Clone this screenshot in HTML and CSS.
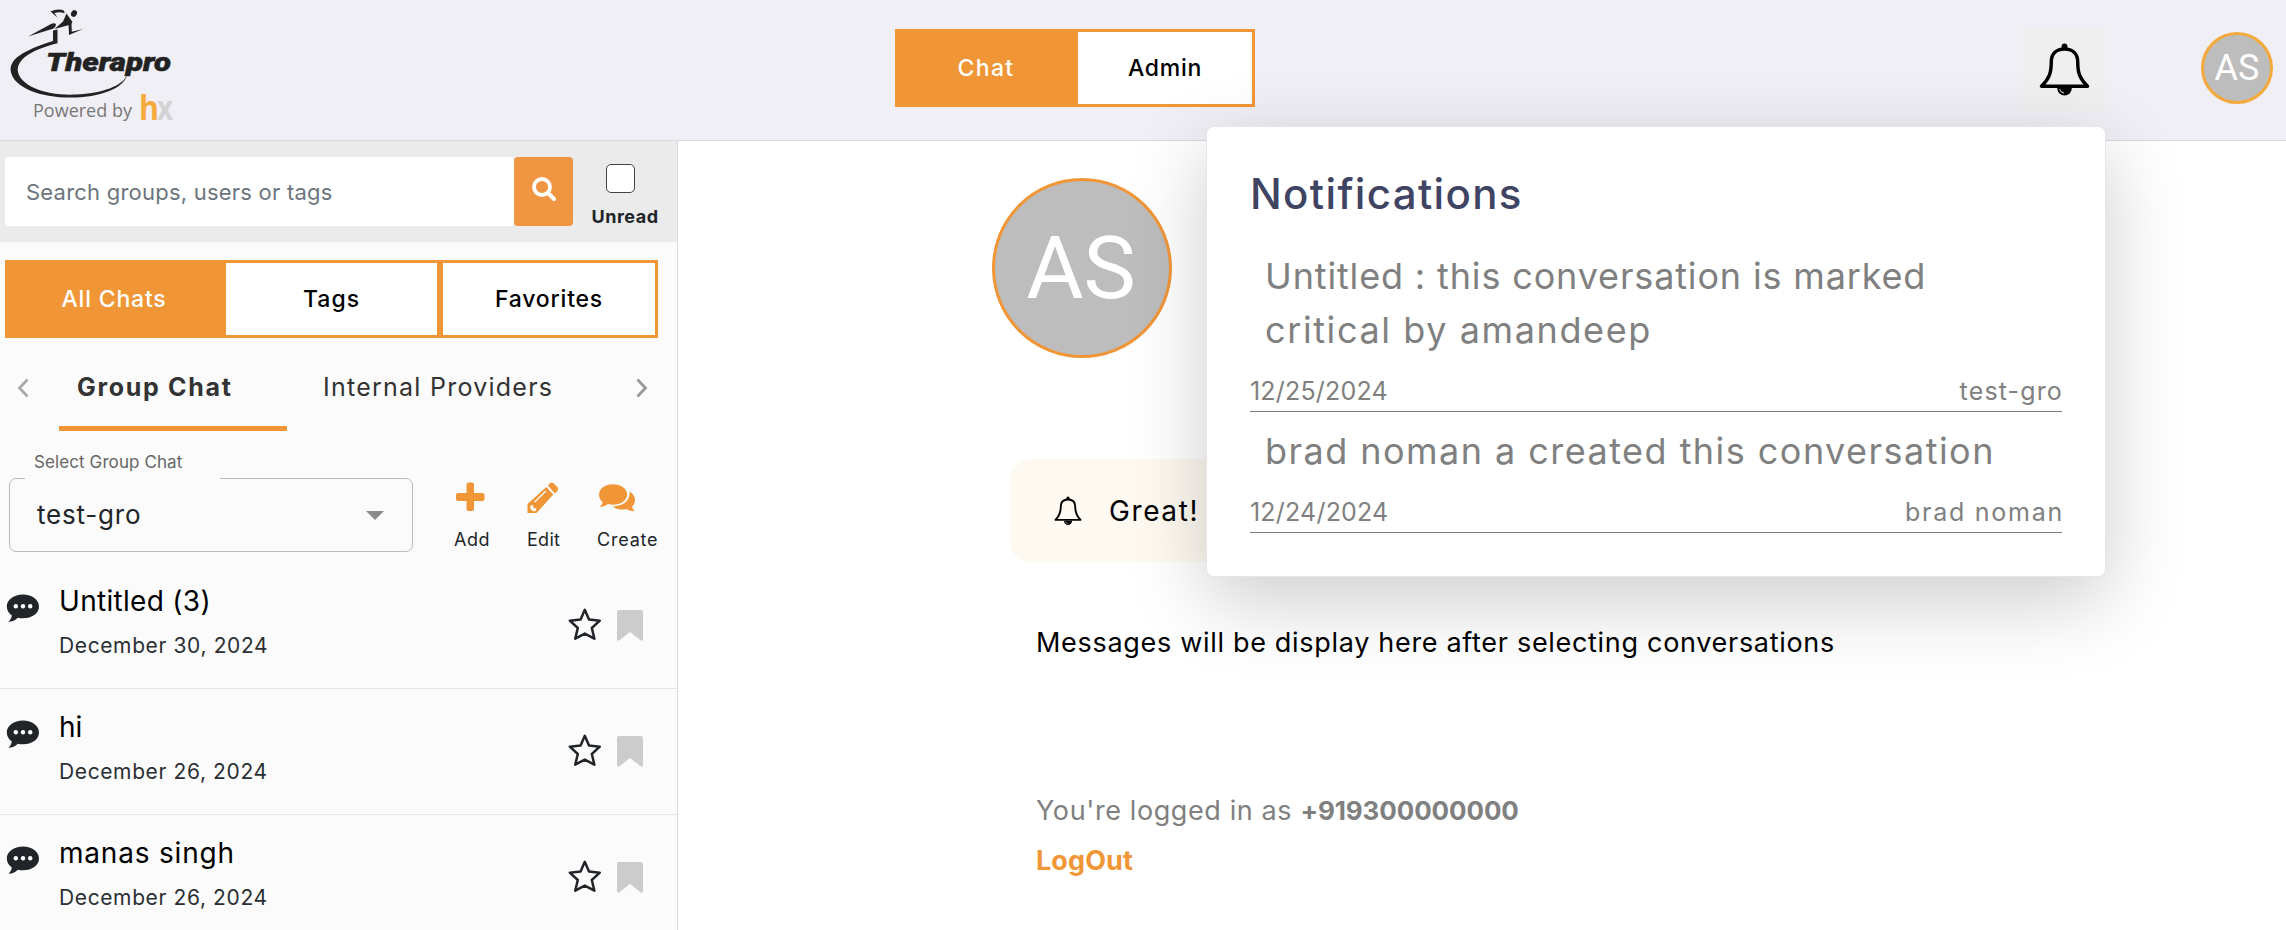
FILE: index.html
```html
<!DOCTYPE html>
<html lang="en">
<head>
<meta charset="utf-8">
<title>Chat</title>
<link rel="stylesheet" href="styles.css">
</head>
<body>
<svg class="defs" width="0" height="0">
  <symbol id="bell" viewBox="0 0 52 56">
    <path d="M26 6.500c-8 0-13.500 4.500-13.500 13.500 0 11-2 17-10 24.500h47c-8-7.500-10-13.500-10-24.500 0-9-5.500-13.500-13.500-13.500z" fill="none" stroke="currentColor" stroke-width="3.500" stroke-linejoin="round"/>
    <circle cx="26" cy="4" r="3" fill="currentColor"/>
    <path d="M18.500 46a7.500 8 0 0 0 15 0z" fill="currentColor"/>
    <path d="M21 47.500a5.500 5 0 0 0 4.500 4" fill="none" stroke="#eee" stroke-width="1"/>
  </symbol>
  <symbol id="bubble" viewBox="0 0 34 30">
    <path d="M17 0.500C26 0.500 33 5.800 33 12.500s-7 11.800-16 11.800c-2 0-3.600-.2-5.200-.6C9.500 26.300 6 27.800 2.500 27.800c2-2 3.200-4.200 3.300-6.300C3 19.300.8 16.500.8 12.500.8 5.800 8 .5 17 .5z" fill="#212529"/>
    <circle cx="9.800" cy="12.300" r="2.200" fill="#fff"/><circle cx="17" cy="12.300" r="2.200" fill="#fff"/><circle cx="24.200" cy="12.300" r="2.200" fill="#fff"/>
  </symbol>
  <symbol id="star" viewBox="0 0 34 34">
    <path d="M16.800 2.800l4.200 9.800 10.800 1.100-8 7.300 2.600 10.700-9.600-5.100-9.600 5.100L9.800 21l-8-7.300 10.800-1.100z" fill="none" stroke="#212529" stroke-width="2.500" stroke-linejoin="round"/>
  </symbol>
  <symbol id="mark" viewBox="0 0 26 31">
    <path d="M2 0h22a2 2 0 0 1 2 2v27c0 1.600-1.200 2.200-2.400 1.200L13 22 2.400 30.200C1.200 31.200 0 30.600 0 29V2a2 2 0 0 1 2-2z" fill="#ccc"/>
  </symbol>
</svg>

<header class="topbar">
  <div class="brand">
    <svg class="brand-logo" width="180" height="128" viewBox="0 0 180 128">
      <path d="M53 30.500l4.500-1v13.700C30 50 16 60 18 72c3 14 28 24 58 22.500 27-1 46-9 51-19-4 13-26 21-51 22-33 1.300-61-9-65-25-3-13 12-22 42-31.500z" fill="#222"/>
      <path d="M28 36.500L51 24q4-1.500 5 .5-.5 3-4 4.500z" fill="#222"/>
      <path d="M54.500 29L63 21.500 66.500 13.500 72.500 22 71 24.500z" fill="#222"/>
      <path d="M50.500 11.500Q57 8.300 63 10q2 1.200 1.500 3.300Q60 11.500 54.500 13l3 4.500z" fill="#222"/>
      <path d="M68.500 24l3-.5.300 8.300L83 29l-14 6z" fill="#222"/>
      <ellipse cx="74" cy="13.500" rx="2.800" ry="3.500" transform="rotate(30 74 13.500)" fill="#222"/>
      <text x="46" y="71" class="logo-name" textLength="125" lengthAdjust="spacingAndGlyphs">Therapro</text>
      <text x="33" y="117" class="logo-sub" textLength="99" lengthAdjust="spacingAndGlyphs">Powered by</text>
      <text x="157" y="119.500" class="logo-x" textLength="16" lengthAdjust="spacingAndGlyphs">x</text>
      <text x="139" y="119.500" class="logo-h" textLength="20" lengthAdjust="spacingAndGlyphs">h</text>
    </svg>
  </div>
  <nav class="switch">
    <a class="switch-item is-on"><span class="t-chat">Chat</span></a>
    <a class="switch-item"><span class="t-admin">Admin</span></a>
  </nav>
  <div class="account">
    <div class="bell-box"><svg class="bell-lg"><use href="#bell"/></svg></div>
    <div class="avatar avatar-sm">AS</div>
  </div>
</header>

<div class="body">
  <aside class="side">
    <div class="search">
      <div class="search-field"><span class="t-search">Search groups, users or tags</span></div>
      <div class="search-btn">
        <svg width="24" height="24" viewBox="0 0 24 24"><circle cx="10" cy="10" r="8" fill="none" stroke="#fff" stroke-width="3.800"/><path d="M16 16l6 6" stroke="#fff" stroke-width="4" stroke-linecap="round"/></svg>
      </div>
      <div class="unread"><span class="box"></span><b class="t-unread">Unread</b></div>
    </div>
    <div class="filters">
      <a class="filter is-on"><span class="t-all">All Chats</span></a>
      <a class="filter"><span class="t-tags">Tags</span></a>
      <a class="filter"><span class="t-fav">Favorites</span></a>
    </div>
    <div class="tabs">
      <svg class="arrow" width="12" height="20" viewBox="0 0 12 20"><path d="M10.500 1.500L2.500 10l8 8.500" fill="none" stroke="#aaa" stroke-width="2.800"/></svg>
      <div class="tab tab-on"><b class="t-group">Group Chat</b></div>
      <div class="tab tab-off"><span class="t-internal">Internal Providers</span></div>
      <svg class="arrow" width="12" height="20" viewBox="0 0 12 20"><path d="M1.500 1.500l8 8.500-8 8.500" fill="none" stroke="#999" stroke-width="2.800"/></svg>
    </div>
    <div class="picker">
      <div class="select">
        <span class="select-label"><span class="t-label">Select Group Chat</span></span>
        <span class="t-value">test-gro</span>
        <svg width="18" height="9" viewBox="0 0 18 9"><path d="M0 0h18L9 9z" fill="#8a8a8a"/></svg>
      </div>
      <div class="actions">
        <div class="action a-add"><svg width="30" height="30" viewBox="0 0 30 30"><path d="M11.500 2.500q0-2 2-2h3.500q2 0 2 2v8.500h8.500q2 0 2 2v4q0 2-2 2H19v8q0 2-2 2h-3.500q-2 0-2-2v-8H3q-2 0-2-2v-4q0-2 2-2h8.500z" fill="#f09637"/></svg><span class="t-add">Add</span></div>
        <div class="action a-edit"><svg width="32" height="32" viewBox="0 0 32 32"><path d="M20.800 3.500l2-2q2-1.800 4 0l3.500 3.500q1.500 2 0 4l-2.300 2.500zM19.300 5l7 7.500L9.500 31H.5v-9z" fill="#f09637"/><path d="M7.500 20L19 9" fill="none" stroke="#fbfbfb" stroke-width="1.300"/><path d="M3.500 23.500l2.500-.5.500 3 3 .5-.8 2.500-2.700.3-2.800-2.800z" fill="#fff"/></svg><span class="t-edit">Edit</span></div>
        <div class="action a-create"><svg width="38" height="32" viewBox="0 0 38 32"><path d="M31.500 9.500c3.500 2 5.500 5 5.500 8.500 0 2.600-1 4.900-2.900 6.700.5 1.800 1.500 3.200 2.400 4.500-3 .2-5.600-.7-7.800-2.200-5 1.200-10.700.3-14-2.600C25 24.500 32.500 18.500 31.500 9.500z" fill="#f09637"/><path d="M15 2.200C23 2.200 29.200 6.800 29.200 12.500S23 22.800 15 22.800c-1.800 0-3.500-.2-5-.7-2.200 1.700-5 2.900-8 2.900 1.300-1.500 2.300-3.100 2.700-5C2.300 18 1 15.500 1 12.500 1 6.800 7 2.200 15 2.200z" fill="#f09637"/></svg><span class="t-create">Create</span></div>
      </div>
    </div>
    <div class="list">
      <div class="row"><svg class="i-bubble"><use href="#bubble"/></svg><div class="who"><span class="name t-n1">Untitled (3)</span><span class="date">December 30, 2024</span></div><svg class="i-star"><use href="#star"/></svg><svg class="i-mark"><use href="#mark"/></svg></div>
      <div class="row"><svg class="i-bubble"><use href="#bubble"/></svg><div class="who"><span class="name t-n2">hi</span><span class="date">December 26, 2024</span></div><svg class="i-star"><use href="#star"/></svg><svg class="i-mark"><use href="#mark"/></svg></div>
      <div class="row"><svg class="i-bubble"><use href="#bubble"/></svg><div class="who"><span class="name t-n3">manas singh</span><span class="date">December 26, 2024</span></div><svg class="i-star"><use href="#star"/></svg><svg class="i-mark"><use href="#mark"/></svg></div>
    </div>
  </aside>

  <main class="main">
    <div class="avatar avatar-lg">AS</div>
    <div class="banner"><svg class="bell-sm"><use href="#bell"/></svg><span class="t-great">Great!</span></div>
    <p class="hint"><span class="t-hint">Messages will be display here after selecting conversations</span></p>
    <p class="login"><span class="t-login">You're logged in as </span><b class="t-phone">+919300000000</b></p>
    <p class="logout"><b class="t-logout">LogOut</b></p>
  </main>
</div>

<section class="popup">
  <h2 class="t-title">Notifications</h2>
  <article class="note">
    <p class="note-text"><span class="t-m1">Untitled : this conversation is marked</span><br><span class="t-m2">critical by amandeep</span></p>
    <div class="note-meta"><span class="t-date">12/25/2024</span><span class="t-r1">test-gro</span></div>
  </article>
  <article class="note">
    <p class="note-text"><span class="t-m3">brad noman a created this conversation</span></p>
    <div class="note-meta"><span class="t-date">12/24/2024</span><span class="t-r2">brad noman</span></div>
  </article>
</section>
</body>
</html>
```

FILE: styles.css
```css
* { box-sizing: border-box; }
body { margin: 0; width: 2286px; height: 930px; overflow: hidden; position: relative; background: #fff; color: #000; font-family: Inter, "Open Sans", sans-serif; font-size: 26px; line-height: 1; }
p, h2 { margin: 0; }
span, b { white-space: nowrap; }
.defs { position: absolute; }

/* header */
.topbar { height: 141px; display: flex; background: #f0eff5; border-bottom: 1px solid #d9d8e2; }
.brand { width: 895px; }
.brand-logo { display: block; overflow: visible; }
.logo-name { font: italic 900 25px Roboto, sans-serif; fill: #222; stroke: #222; stroke-width: .5px; }
.logo-sub { font: 18px "Open Sans", sans-serif; fill: #777; }
.logo-h { font: bold 34px "Open Sans", sans-serif; fill: #f5ab3d; }
.logo-x { font: bold 34px "Open Sans", sans-serif; fill: #d3d3d6; }
.switch { display: flex; width: 360px; height: 78px; margin-top: 29px; border: 3px solid #f09637; background: #fff; }
.switch-item { flex: 1; display: flex; align-items: center; justify-content: center; font-size: 23px; font-weight: 500; }
.switch-item.is-on { flex: 0 0 180px; padding-right: 4px; background: #f09637; color: #fff; }
.account { margin-left: auto; display: flex; padding-right: 13px; }
.bell-box { width: 83px; height: 83px; margin: 28px 95px 0 0; padding: 14px 16px; background: #efefef; }
.bell-lg { display: block; width: 51px; height: 56px; }
.avatar { display: flex; align-items: center; justify-content: center; border: 3px solid #f09637; border-radius: 50%; background: #bdbdbd; color: #fff; font-family: Roboto, sans-serif; }
.avatar-sm { width: 72px; height: 72px; margin-top: 32px; border-color: #f4a93c; font-size: 36px; }
.avatar-lg { width: 180px; height: 180px; margin: 37px 0 0 314px; padding-right: 2px; font-size: 88px; }

/* sidebar */
.body { display: flex; height: 789px; overflow: hidden; }
.side { flex: none; width: 678px; background: #fbfbfb; border-right: 1px solid #d9d8e2; display: flex; flex-direction: column; }
.side > div { flex: none; }
.search { height: 101px; display: flex; padding: 16px 0 0 5px; background: #ebebeb; }
.search-field { width: 509px; height: 69px; padding-left: 21px; display: flex; align-items: center; background: #fff; border-radius: 4px; color: #6c757d; font-size: 22px; }
.search-btn { width: 59px; height: 69px; display: flex; align-items: center; justify-content: center; padding-bottom: 5px; background: #f09642; border-radius: 4px; }
.unread { width: 68px; margin-left: 18px; display: flex; flex-direction: column; align-items: center; color: #212529; font-size: 18px; }
.box { width: 29px; height: 29px; margin: 7px 0 15px -10px; border: 1px solid #444; border-radius: 5px; background: #fff; }
.filters { display: flex; width: 653px; height: 78px; margin: 18px 0 0 5px; border: 3px solid #f09637; background: #fff; }
.filter { display: flex; align-items: center; justify-content: center; font-size: 23px; font-weight: 500; }
.filter.is-on { width: 218px; padding-right: 6px; color: #fff; background: #f09637; }
.filter:nth-child(2) { width: 211px; }
.filter:nth-child(3) { width: 218px; border-left: 6px solid #f09637; }
.tabs { display: flex; height: 93px; padding: 40px 0 0 17px; }
.arrow { flex: none; }
.tab { height: 57px; margin-top: -4px; font-size: 25px; line-height: 26px; color: #333; }
.tab-on { width: 228px; margin-left: 30px; padding-left: 18px; border-bottom: 5px solid #f09637; }
.tab-off { width: 313px; margin-left: 36px; }
.picker { display: flex; height: 132px; padding: 47px 0 0 9px; }
.select { position: relative; width: 404px; height: 74px; padding: 0 28px 0 27px; display: flex; align-items: center; justify-content: space-between; border: 1px solid #bbb; border-radius: 7px; font-size: 26px; color: #212529; }
.select-label { position: absolute; left: 15px; top: -25px; width: 195px; height: 27px; padding-left: 9px; background: #fbfbfb; font-size: 17px; color: #666; }
.actions { display: flex; padding-top: 4px; color: #212529; font-size: 18px; }
.action { display: flex; flex-direction: column; height: 67px; justify-content: space-between; }
.a-add { width: 73px; margin-left: 41px; }
.a-add svg { margin-left: 1px; }
.a-edit { width: 70px; }
.a-create svg { margin-left: 1px; }
.list { display: flex; flex-direction: column; }
.row { height: 126px; display: flex; padding-left: 6px; border-bottom: 1px solid #e4e4e4; }
.row svg { flex: none; }
.i-bubble { width: 34px; height: 30px; margin-top: 31px; }
.who { width: 527px; padding: 24px 0 0 19px; display: flex; flex-direction: column; gap: 20px; }
.name { font-size: 28px; }
.date { font-size: 21px; color: #2b2f33; letter-spacing: .62px; }
.i-star { width: 34px; height: 34px; margin: 44px 15px 0 1px; }
.i-mark { width: 26px; height: 31px; margin-top: 47px; }

/* content */
.main { flex: 1; display: flex; flex-direction: column; }
.banner { width: 900px; height: 103px; margin: 101px 0 0 332px; padding-left: 44px; display: flex; align-items: center; background: #fef9f1; border-radius: 20px; font-size: 28px; }
.bell-sm { width: 28px; height: 30px; margin-right: 27px; }
.hint { margin: 67px 0 0 358px; font-size: 27px; }
.login { margin: 141px 0 0 358px; font-size: 27px; color: #808080; }
.login b { font-size: 26px; }
.logout { margin: 23px 0 0 358px; font-size: 27px; color: #f09637; }

/* notifications */
.popup { position: absolute; left: 1206px; top: 126px; width: 900px; height: 451px; padding: 46px 43px 0 43px; background: #fff; border: 1px solid #e6e6e6; border-radius: 8px; box-shadow: 0 24px 80px rgba(0, 0, 0, .2); color: #808080; }
.popup h2 { font-size: 42px; font-weight: 500; color: #3f4463; }
.note { border-bottom: 1px solid #808080; }
.note-text { margin-bottom: 22px; padding-left: 15px; font-size: 36px; line-height: 54px; }
.note-meta { display: flex; justify-content: space-between; padding-bottom: 7px; font-size: 25px; }
h2 + .note { margin-top: 34px; }
.note + .note { padding-top: 12px; }

/* tracking */
.t-chat { letter-spacing: 1.4px; }
.t-admin { letter-spacing: .7px; }
.t-search { letter-spacing: .22px; }
.t-unread { letter-spacing: .5px; }
.t-all, .t-fav, .t-value, .t-n3 { letter-spacing: .8px; }
.t-tags { letter-spacing: 1px; }
.t-group { letter-spacing: 1.7px; }
.t-internal { letter-spacing: 1.25px; }
.t-label { letter-spacing: .1px; }
.t-add { letter-spacing: .5px; }
.t-edit { letter-spacing: .3px; }
.t-create { letter-spacing: .8px; }
.t-n1 { letter-spacing: .3px; }
.t-great { letter-spacing: 1.6px; }
.t-hint { letter-spacing: .69px; }
.t-login { letter-spacing: .6px; }
.t-phone { letter-spacing: -.1px; }
.t-logout { letter-spacing: .1px; }
.t-title { letter-spacing: 1.35px; }
.t-m1 { letter-spacing: .85px; }
.t-m2 { letter-spacing: 1.6px; }
.t-m3 { letter-spacing: 1.46px; }
.t-date { letter-spacing: .2px; }
.t-r1 { letter-spacing: 1.15px; margin-right: -1px; }
.t-r2 { letter-spacing: 1.75px; margin-right: -2px; }
```
